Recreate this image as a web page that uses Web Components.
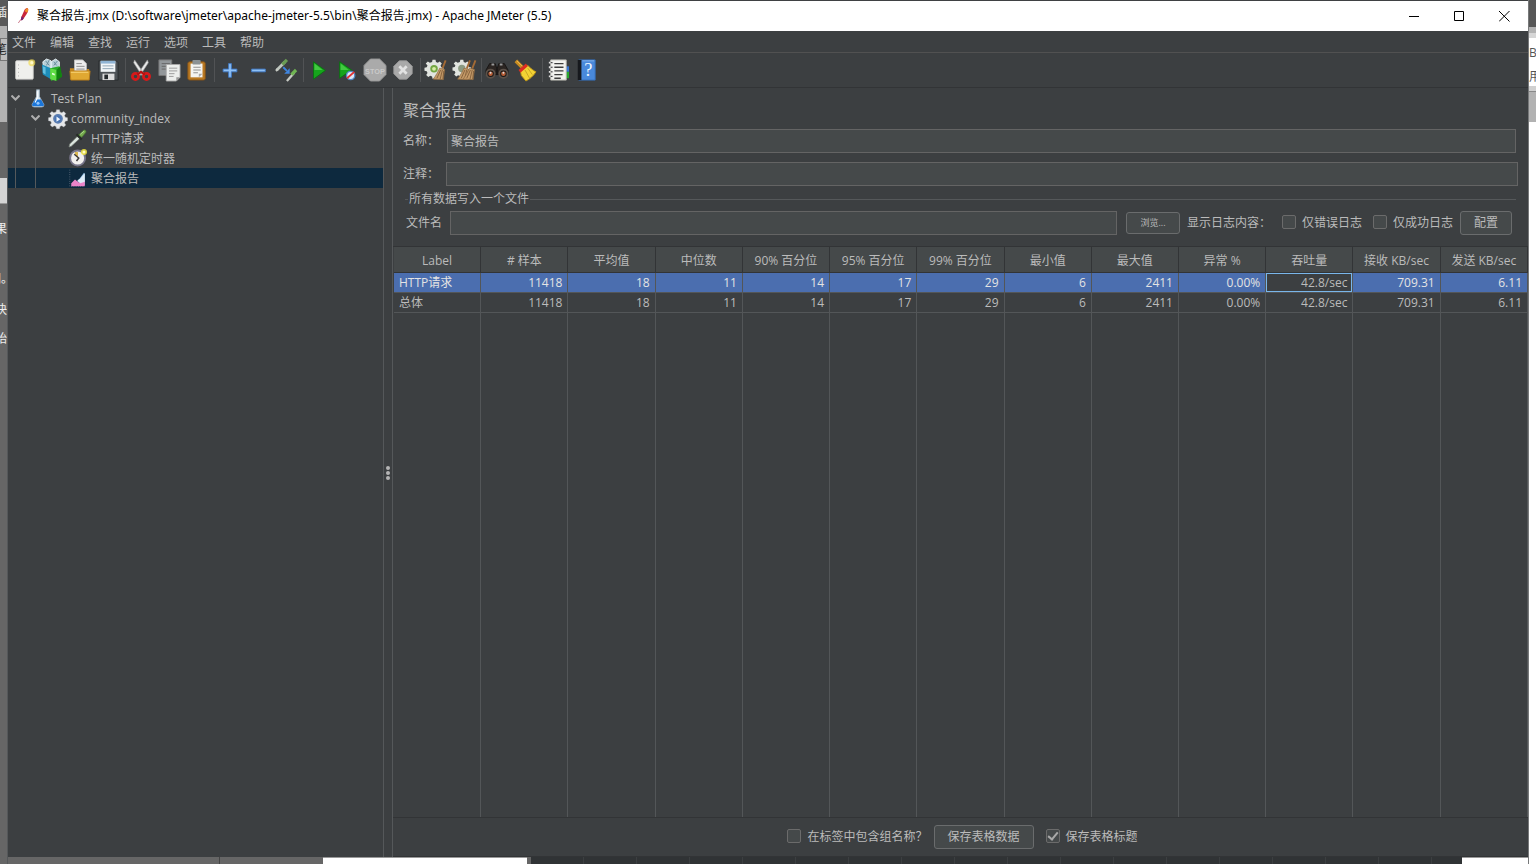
<!DOCTYPE html>
<html lang="zh-CN">
<head>
<meta charset="utf-8">
<title>聚合报告.jmx - Apache JMeter (5.5)</title>
<style>
  html, body { margin: 0; height: 100%; }
  body {
    --bg: #3c3f41; --field: #45494a; --line: #5b5d5f; --edge: #323436; --border: #646464; --text: #bbbbbb;
    font: 12px/20px "Open Sans", "Noto Sans CJK SC", sans-serif;
    color: var(--text); background: #666; overflow: hidden;
  }
</style>
</head>
<body>
<desk-top>
  <app-window>
    <title-bar slot="title">聚合报告.jmx (D:\software\jmeter\apache-jmeter-5.5\bin\聚合报告.jmx) - Apache JMeter (5.5)</title-bar>
    <menu-bar slot="menu" items="文件,编辑,查找,运行,选项,工具,帮助"></menu-bar>
    <tool-bar slot="tools"></tool-bar>
    <split-pane>
      <nav-tree slot="side">
        <tree-item level="1" icon="flask" open>Test Plan</tree-item>
        <tree-item level="2" icon="gear" open>community_index</tree-item>
        <tree-item level="3" icon="dropper">HTTP请求</tree-item>
        <tree-item level="3" icon="clock">统一随机定时器</tree-item>
        <tree-item level="3" icon="chart" selected>聚合报告</tree-item>
      </nav-tree>
      <report-panel>
        <report-form></report-form>
        <report-table slot="table"></report-table>
        <report-footer slot="footer"></report-footer>
      </report-panel>
    </split-pane>
  </app-window>
</desk-top>
<script>
const gearPath = 'M10 1h4l.6 3 2.4 1 2.6-1.7 2.8 2.8L20.700 8.700l1 2.300 3 .600v4l-3 .600-1 2.400 1.700 2.600-2.800 2.800-2.600-1.700-2.400 1-.600 3h-4l-.600-3-2.400-1-2.600 1.700-2.800-2.800 1.700-2.600-1-2.400-3-.600v-4l3-.600 1-2.300L1 6.100l2.800-2.800L6.400 5l3-1z';
const broom = x => `<g transform="translate(${x} 0)"><path d="M20.500 1.500l-3.500 9" stroke="#a46b35" stroke-width="2"/><path d="M14 10l5.500 1.500-1.500 11-11-.5c3-4 5-8 7-12z" fill="#c49a68" stroke="#8a653d" stroke-width=".7"/><path d="M15 12l-4 9M17 12l-2.500 10M18.500 13l-1 9" stroke="#725130" stroke-width=".8"/></g>`;
const ICONS = {
  feather: '<path d="M18.500 1.500c3 2 .5 6-1 9l-6 9-3 .5 1-5 4-9c1-2.500 2.500-4 5-4.500z" fill="#c9263c"/><path d="M18.500 1.500c2.500 1.500 1 4.500 0 7l-4-2c1-2.500 2-4.500 4-5z" fill="#ee8d28"/><path d="M10 14l3 3-2.500 3-2 0z" fill="#6b2579"/><path d="M8.500 19L5 24" stroke="#b43b56"/>',
  new: '<rect x="3" y="2" width="19" height="20" rx="1" fill="#f0f0ed" stroke="#d8d8d4"/><path d="M3.500 22.500h18" stroke="#999"/><path d="M6 6v14" stroke="#aaa" stroke-dasharray="1 3"/><circle cx="20.500" cy="4" r="3.800" fill="#f2dd55" opacity=".7"/><circle cx="20.500" cy="4" r="1.700" fill="#fff8c9"/>',
  templates: '<path d="M2 3l4-3 5 2v8l-8 2zM11 3l5-3 4 3v8l-9 2z" fill="#b8cfd7" stroke="#e9f2f5"/><path d="M5 2l4 5M9 1l-3 6M14 3l3 4M18 2l-4 5" stroke="#668999"/><path d="M1 6l10 4v12l-9-5z" fill="#1d8db9"/><path d="M2 8l3 1v8l-3-2z" fill="#62bfe0"/><path d="M10 10l10-2 3 11-12 5z" fill="#29aa28"/><path d="M10 10l7 2v12l-7-2z" fill="#60dc44"/><path d="M17 12l4-4 2 11-6 5z" fill="#11830f"/><path d="M12 15l3 1v2l-3-1z" fill="#e9ffe3"/>',
  open: '<path d="M1 10h8l2 1h11v11H1z" fill="#c88b20"/><path d="M6 1h9l4 4v10H6z" fill="#eee" stroke="#bbb"/><path d="M8 5h6M8 8h9M8 11h9" stroke="#888"/><path d="M1 13h22l-1 10H2z" fill="#e0a832" stroke="#b77b18"/><path d="M2 14.500h19" stroke="#f8d779"/>',
  save: '<path d="M2 2h19l2 2v19H2V4z" fill="#4e5357" stroke="#292c2e"/><path d="M4 2h16v12H4z" fill="#f1f5f7"/><path d="M4 2h16v3H4z" fill="#8fb4d4"/><path d="M6 7.500h12M6 10.500h12" stroke="#8aa1af"/><path d="M6 16h13v7H6z" fill="#ddd"/><path d="M8 17h4v5H8z" fill="#25292c"/>',
  cut: '<path d="M5 1l11 16-3 1L4 4zM19 1l1 3-9 14-3-1z" fill="#e8e9e9" stroke="#999" stroke-width=".7"/><circle cx="6" cy="19" r="3.400" stroke="#d81a1a" stroke-width="3"/><circle cx="18" cy="19" r="3.400" stroke="#d81a1a" stroke-width="3"/><path d="M8 17l4-3 4 3" stroke="#b90f0f" stroke-width="2.500"/>',
  copy: '<path d="M1 1h14v17H1z" fill="#92979a" stroke="#777"/><path d="M4 5h9M4 8h8M4 11h7" stroke="#666"/><path d="M9 6h15v14l-4 4H9z" fill="#eceeec" stroke="#aaa"/><path d="M12 10h9M12 13h9M12 16h6M12 19h5" stroke="#969696"/><path d="M20 24v-4h4z" fill="#999"/>',
  paste: '<rect x="2" y="3" width="19" height="20" rx="2" fill="#b97922" stroke="#81521b"/><path d="M5 5h13v15H5z" fill="#f4f4f2"/><rect x="7" y="1" width="9" height="5" rx="1" fill="#8b9194"/><path d="M8 9h8M8 12h8M8 15h5" stroke="#888"/><path d="M14 20v-4h4z" fill="#aaa"/>',
  plus: '<path d="M10.500 5h3v6h6v3h-6v6h-3v-6h-6v-3h6z" fill="#8fc0f4" stroke="#3f78c4"/>',
  minus: '<path d="M5 11h15v3H5z" fill="#8fc0f4" stroke="#3f78c4"/>',
  toggle: '<path d="M2 12l9-9" stroke="#bec6be" stroke-width="3"/><path d="M8 6l5-5" stroke="#6a9d54" stroke-width="3.500"/><path d="M1 13l2-2M13 24l8-9" stroke="#c7cbc5" stroke-width="2.500"/><path d="M18 17l5-5" stroke="#70b553" stroke-width="3.500"/><path d="M9 9l4 4" stroke="#3f86e0" stroke-width="2"/><path d="M16 10v6h-6z" fill="#3f86e0"/>',
  play: '<path d="M6 3l13 9.500L6 22z" fill="#16a51c" stroke="#0b6e12"/><path d="M7 5l9 7H7z" fill="#42c941"/>',
  playNo: '<path d="M4 3l13 9L4 21z" fill="#16a51c" stroke="#0b6e12"/><path d="M5 5l9 7H5z" fill="#42c941"/><circle cx="16" cy="18" r="4.500" fill="#dce8f7" stroke="#5188c5" stroke-width="1.500"/><path d="M12 21l8-7" stroke="#e13131" stroke-width="2"/>',
  stop: '<path d="M7 0h10l7 7v10l-7 7H7l-7-7V7z" fill="#aaa" stroke="#989898"/><text x="12" y="16" text-anchor="middle" font-family="Liberation Sans" font-size="8" font-weight="700" fill="#c9c9c9">STOP</text>',
  shutdown: '<path d="M8 2h8l6 6v8l-6 6H8l-6-6V8z" fill="#a9a9a9" stroke="#999"/><path d="M8 8l8 8M16 8l-8 8" stroke="#e2e2e2" stroke-width="3"/>',
  clear: `<g transform="scale(.82)"><path d="${gearPath}" fill="#e1e4df"/><circle cx="12" cy="13" r="5" fill="#73a642"/><circle cx="12" cy="13" r="2.500" fill="#d7eda4"/></g>${broom(2)}`,
  clearAll: `<g transform="scale(.8)"><path d="${gearPath}" fill="#e1e4df"/><circle cx="12" cy="13" r="5" fill="#8b9a82"/></g>${broom(-2)}${broom(4)}`,
  search: '<path d="M4 5h6l2 6v6H0v-5zM14 5h6l4 7v5H12v-6z" fill="#2b2522" stroke="#171514"/><path d="M6 6h3M15 6h3" stroke="#999" stroke-width="2"/><circle cx="5" cy="16" r="4.500" fill="#171717" stroke="#5c5149" stroke-width="2"/><circle cx="19" cy="16" r="4.500" fill="#171717" stroke="#5c5149" stroke-width="2"/><circle cx="5" cy="16" r="2.500" fill="#b65c34"/><circle cx="19" cy="16" r="2.500" fill="#b65c34"/><circle cx="5" cy="15" r="1" fill="#ddd"/><circle cx="19" cy="15" r="1" fill="#ddd"/>',
  sweep: '<path d="M2 2l7 7" stroke="#c78b20" stroke-width="4"/><path d="M3 2l6 6" stroke="#efbd58"/><path d="M7 13l8-6c4 4 7 6 9 7-3 5-7 8-11 10L8 18z" fill="#f3d334" stroke="#bd9415"/><path d="M5 12l8-7 2 3-8 7z" fill="#dd2d22"/><path d="M12 12l5 9M15 10l5 7" stroke="#c6a223"/>',
  functions: '<path d="M19 8h5v6h-5z" fill="#3775d3"/><path d="M18 14h6v7h-6z" fill="#28a72e"/><path d="M4 1h17v22H4z" fill="#f3f3ef" stroke="#b5b5ad"/><path d="M8 5h10M8 9h10M8 13h10M8 17h9M8 21h7" stroke="#3d3d3d" stroke-width="1.500"/><path d="M2 4h5M2 9h5M2 14h5M2 19h5" stroke="#ddd" stroke-width="2"/><path d="M4 4h2M4 9h2M4 14h2M4 19h2" stroke="#222"/>',
  help: '<path d="M4 1h18v22H4z" fill="#4989db" stroke="#336dba"/><path d="M3 1h4v22H3z" fill="#17191d"/><path d="M8 2h13" stroke="#88b6ee"/><text x="14.500" y="19" text-anchor="middle" font-family="Liberation Serif" font-size="20" fill="#eff7ff">?</text>',
  flask: '<path d="M10 1h4v9l6 11q0 3-3 3H7q-3 0-3-3l6-11z" fill="#d9e5ee" stroke="#9aabba"/><path d="M8 14h8l4 7q0 2-3 2H7q-3 0-3-2z" fill="#1b76da"/><path d="M11 3v9l-3 6" stroke="#fff" stroke-width="1.500"/><circle cx="12" cy="19" r="2" fill="#8fc4ff"/>',
  gear: `<path d="${gearPath}" fill="#e5e7e9" stroke="#b8bbc0" stroke-width=".5"/><circle cx="12" cy="13" r="5.500" fill="#4874b3" stroke="#5b7db0" stroke-width="2"/><path d="M10 10l5 3.500-5 3.500z" fill="#eff6ff"/>`,
  dropper: '<path d="M0 24l1-4 10-10 3 3L3 23z" fill="#dce5df" stroke="#798279"/><path d="M10 7l7 7" stroke="#262c26" stroke-width="3"/><path d="M13 8l6-6c2-2 5 1 3 3l-5 6z" fill="#78ad51" stroke="#4a7c30"/><path d="M15 7l5-4" stroke="#c0e6a2"/>',
  clock: '<circle cx="11.500" cy="12" r="10" fill="#f1f0ee" stroke="#77758a" stroke-width="2.500"/><path d="M12 12V4H8C7 7 9 10 12 12z" fill="#ddb951"/><path d="M7 7l6 5-3 4" stroke="#403c3d" stroke-width="2"/><circle cx="20" cy="4" r="4" fill="#f3e73c" opacity=".85"/><circle cx="20" cy="4" r="2" fill="#fffbc2"/>',
  chart: '<path d="M1 1v22h20" stroke="#778190" stroke-dasharray="1 2"/><path d="M11 17l9-12 1 1v16z" fill="#a3cbee"/><path d="M3 23v-4l5-5 5 4 8-3v8z" fill="#ec83c9"/><path d="M11 15l4-2 6-7v11l-6 2z" fill="#ddecf7"/>'
};
const glyph = n => `<svg viewBox="0 0 24 24" fill="none" aria-hidden="true">${ICONS[n]}</svg>`;

function define(name, render) {
  customElements.define(name, class extends HTMLElement {
    constructor() { super(); this.attachShadow({ mode: 'open' }); }
    connectedCallback() { this.shadowRoot.innerHTML = render(this); }
  });
}

const FIELD_CSS = `
  input[type=text] { box-sizing: border-box; height: 24px; min-width: 0; flex: 1; margin: 0; padding: 0 3px;
    font: inherit; color: var(--text); background: var(--field); border: 1px solid var(--border); border-radius: 0; outline: 0; }
  input[type=checkbox] { appearance: none; box-sizing: border-box; display: grid; place-items: center; width: 14px; height: 14px;
    margin: 0 0 2px; background: var(--field); border: 1px solid #6b6b6b; border-radius: 2px; }
  input[type=checkbox]:checked::before { content: ""; width: 4px; height: 8px; margin-bottom: 3px;
    border: solid #a9a9a9; border-width: 0 2px 2px 0; transform: rotate(40deg); }
  button { box-sizing: border-box; height: 24px; padding: 0; font: inherit; color: var(--text);
    background: var(--field); border: 1px solid #6a6c6d; border-radius: 3px; white-space: nowrap; }
  label { white-space: nowrap; }`;

define('desk-top', () => `<style>
  :host { display: grid; height: 100vh; grid-template: 1px minmax(0, 1fr) 7px / 8px minmax(0, 1fr) 8px; background: #3f4143; overflow: hidden; }
  .side { grid-row: 1 / 4; overflow: hidden; min-height: 0; display: flex; flex-direction: column; white-space: nowrap; }
  .side > div { flex: none; box-sizing: border-box; display: flex; align-items: center; }
  .left { grid-column: 1; background: #666; color: #eee; border-right: 1px solid #55585a; font-feature-settings: "halt"; }
  .left > div { justify-content: flex-end; }
  .right { grid-column: 3; background: #fff; color: #555; border-left: 1px solid #77797a; }
  .center { grid-column: 2; grid-row: 2; min-width: 0; min-height: 0; display: grid; }
  .bottom { grid-column: 2; grid-row: 3; display: grid; grid-template-columns: 315px 204px 1fr 66px; }
  .task { background: linear-gradient(90deg, transparent 211px, #444 211px, #444 212px, transparent 212px), #666; }
  .page { background: #fff; border-top: 1px solid #999; }
  .dark { background: repeating-linear-gradient(90deg, #303335 0 52px, #3c3f41 52px 53px); border-left: 4px solid #666; }
</style>
<div class="side left">
  <div style="height:26px;background:#595959">插</div>
  <div style="height:12px;background:#b2b2b2"></div>
  <div style="height:23px;background:#bdbdbd;color:#222;border:solid #777;border-width:1px 0 1px 1px">笔</div>
  <div style="height:61px;background:#b2b2b2"></div>
  <div style="height:56px"></div>
  <div style="height:26px;background:#d4d4d4;border-bottom:1px solid #999"></div>
  <div style="height:50px">果</div>
  <div style="height:50px">调。</div>
  <div style="height:12px">快</div>
  <div style="height:46px">始</div>
</div>
<div class="center"><slot></slot></div>
<div class="side right">
  <div style="height:27px;background:#575757"></div>
  <div style="height:6px;background:#b2b2b2"></div>
  <div style="height:5px;background:#d6d6d6"></div>
  <div style="height:30px">Be</div>
  <div style="height:18px">用</div>
  <div style="height:6px;background:#d0d0d0;border-bottom:1px solid #888"></div>
  <div style="height:30px;background:#b2b2b2"></div>
</div>
<div class="bottom"><div class="task"></div><div class="page"></div><div class="dark"></div><div class="page"></div></div>`);

define('app-window', () => `<style>
  :host { display: grid; grid-template-rows: auto auto auto minmax(0, 1fr); grid-template-columns: minmax(0, 1fr); background: var(--bg); min-height: 0; }
</style><slot name="title"></slot><slot name="menu"></slot><slot name="tools"></slot><slot></slot>`);

define('title-bar', () => `<style>
  :host { display: flex; align-items: center; height: 30px; padding-right: 1px; background: #fff; color: #000; }
  .logo { width: 18px; height: 18px; margin: 0 4px 0 7px; }
  .logo svg { display: block; width: 16px; height: 16px; }
  h1 { flex: 1; margin: 0; font: 12px/20px "Noto Sans", "Noto Sans CJK SC", sans-serif; white-space: nowrap; }
  button { width: 45px; height: 30px; padding: 0; border: 0; background: none; display: grid; place-items: center; }
  button svg { width: 11px; height: 11px; }
</style>
<span class="logo">${glyph('feather')}</span><h1><slot></slot></h1>
<button aria-label="最小化"><svg viewBox="0 0 11 11"><path d="M0 5.500h10" stroke="#000"/></svg></button>
<button aria-label="最大化"><svg viewBox="0 0 11 11"><path d="M.5.5h9v9h-9z" fill="none" stroke="#000"/></svg></button>
<button aria-label="关闭"><svg viewBox="0 0 11 11"><path d="M0 0l10.500 10.500M10.500 0L0 10.500" stroke="#000"/></svg></button>`);

define('menu-bar', el => `<style>
  :host { display: block; border-bottom: 1px solid #515151; }
  nav { display: flex; gap: 14px; height: 21px; padding-left: 4px; align-items: center; }
  button { padding: 2px 0 0; border: 0; background: none; color: inherit; font: inherit; }
</style><nav>${el.getAttribute('items').split(',').map(t => `<button>${t}</button>`).join('')}</nav>`);

define('tool-bar', () => {
  const groups = [
    [['new', '新建'], ['templates', '模板'], ['open', '打开'], ['save', '保存']],
    [['cut', '剪切'], ['copy', '复制'], ['paste', '粘贴']],
    [['plus', '展开'], ['minus', '折叠'], ['toggle', '切换']],
    [['play', '启动'], ['playNo', '不停顿开始'], ['stop', '停止', 1], ['shutdown', '关闭', 1]],
    [['clear', '清除'], ['clearAll', '清除全部']],
    [['search', '查找'], ['sweep', '重置搜索']],
    [['functions', '函数助手'], ['help', '帮助']]
  ];
  return `<style>
    :host { display: flex; height: 34px; padding-left: 3px; align-items: center; border-bottom: 1px solid var(--edge); }
    button { width: 28px; height: 28px; padding: 0 0 0 2px; border: 0; background: none; display: grid; place-items: center start; }
    svg { width: 22px; height: 22px; overflow: visible; }
    i { width: 1px; height: 24px; margin: 0 2px; background: #515355; }
  </style>` + groups.map(g => g.map(([n, t, off]) =>
    `<button aria-label="${t}"${off ? ' disabled' : ''}>${glyph(n)}</button>`).join('')).join('<i></i>');
});

define('split-pane', () => `<style>
  :host { display: grid; grid-template-columns: 375px 10px minmax(0, 1fr); grid-template-rows: minmax(0, 1fr); min-height: 0; }
  .bar { box-sizing: border-box; border: solid #55585a; border-width: 0 1px; display: flex; flex-direction: column; gap: 1px; justify-content: center; align-items: center; }
  .bar i { width: 4px; height: 4px; border-radius: 50%; background: #b5b5b5; }
</style><slot name="side"></slot><div class="bar" role="separator"><i></i><i></i><i></i></div><slot></slot>`);

define('nav-tree', () => `<style>:host { display: block; }</style><slot></slot>`);

define('tree-item', el => {
  const level = +el.getAttribute('level');
  const guides = Array.from({ length: level - 1 }, () => '<i></i>').join('');
  return `<style>
    :host { display: flex; height: 20px; align-items: center; white-space: nowrap; }
    :host([selected]) { background: #0d293e; }
    i { box-sizing: border-box; width: 20px; height: 20px; padding: 0; background: linear-gradient(90deg, transparent 7px, #55595b 7px, #55595b 8px, transparent 8px); }
    .arrow { width: 20px; height: 20px; display: grid; place-items: center start; }
    .arrow svg { width: 9px; height: 6px; margin-left: 3px; }
    .icon { width: 20px; height: 18px; margin-right: 3px; display: flex; justify-content: center; }
    .icon svg { width: 18px; height: 18px; overflow: visible; }
    .text { padding-top: 2px; }
  </style>${guides}<span class="arrow">${el.hasAttribute('open') ? '<svg viewBox="0 0 9 6"><path d="M.5.5l4 4 4-4" fill="none" stroke="#adadad" stroke-width="2"/></svg>' : ''}</span>
  <span class="icon">${glyph(el.getAttribute('icon'))}</span><span class="text"><slot></slot></span>`;
});

define('report-panel', () => `<style>
  :host { display: grid; grid-template-rows: auto minmax(0, 1fr) auto; grid-template-columns: minmax(0, 1fr); min-height: 0; }
</style><slot></slot><slot name="table"></slot><slot name="footer"></slot>`);

define('report-form', () => `<style>${FIELD_CSS}
  :host { display: block; padding: 10px 12px 11px 10px; }
  h2 { margin: 0 0 7px; font-size: 16px; line-height: 24px; font-weight: 400; }
  .row { display: flex; align-items: center; margin-bottom: 9px; }
  .row label { width: 44px; }
  .row.wide { margin: 0 -2px 3px 0; }
  .wide label { width: 43px; }
  fieldset { min-width: 0; margin: 0 0 0 2px; padding: 2px 4px 0 1px; border: 0; border-top: 1px solid #55585a; }
  legend { padding: 0 1px; margin-left: 2px; line-height: 20px; }
  .file { display: flex; align-items: center; }
  .file input[type=text] { margin: 0 9px 0 8px; }
  .browse { width: 54px; height: 22px; font-size: 9px; margin-right: 7px; }
  .logs { width: 95px; }
  .check { display: flex; align-items: center; gap: 6px; margin-right: 11px; }
  .check + .check { margin-right: 7px; }
  .config { width: 52px; }
</style>
<h2>聚合报告</h2>
<div class="row"><label for="name">名称：</label><input id="name" type="text" value="聚合报告"></div>
<div class="row wide"><label for="note">注释：</label><input id="note" type="text"></div>
<fieldset><legend>所有数据写入一个文件</legend>
  <div class="file"><label for="file">文件名</label><input id="file" type="text">
    <button class="browse">浏览...</button><span class="logs">显示日志内容：</span>
    <label class="check"><input type="checkbox">仅错误日志</label>
    <label class="check"><input type="checkbox">仅成功日志</label>
    <button class="config">配置</button></div>
</fieldset>`);

define('report-table', () => {
  const heads = ['Label', '# 样本', '平均值', '中位数', '90% 百分位', '95% 百分位', '99% 百分位', '最小值', '最大值', '异常 %', '吞吐量', '接收 KB/sec', '发送 KB/sec'];
  const data = ['11418', '18', '11', '14', '17', '29', '6', '2411', '0.00%', '42.8/sec', '709.31', '6.11'];
  const row = (name, cls) => `<tr class="${cls}"><td>${name}</td>${data.map((v, i) => `<td${cls && i === 9 ? ' class="focus"' : ''}>${v}</td>`).join('')}</tr>`;
  return `<style>
    :host { display: block; min-height: 0; padding-left: 1px; border: solid var(--edge); border-width: 1px 0; overflow: hidden; }
    table { width: 100%; height: 100%; table-layout: fixed; border-collapse: separate; border-spacing: 0; }
    th, td { box-sizing: border-box; padding: 0 5px; font-weight: 400; line-height: 19px; white-space: nowrap; border: solid #535658; border-width: 0 1px 1px 0; }
    th { height: 26px; padding: 2px 0 0; background: var(--field); border-color: var(--edge); text-align: center; }
    td { height: 20px; text-align: right; }
    td:first-child { text-align: left; }
    .selected td { background: #4b6eaf; color: #e4e4e4; }
    .selected .focus { background: var(--bg); color: var(--text); box-shadow: inset 0 0 0 1px #79b6ea; }
    .filler td { height: auto; border-bottom: 0; }
  </style><table><thead><tr>${heads.map(h => `<th scope="col">${h}</th>`).join('')}</tr></thead>
  <tbody>${row('HTTP请求', 'selected')}${row('总体', '')}<tr class="filler">${'<td></td>'.repeat(13)}</tr></tbody></table>`;
});

define('report-footer', () => `<style>${FIELD_CSS}
  :host { display: flex; height: 39px; align-items: center; justify-content: center; gap: 12px; padding-left: 4px; border-bottom: 1px solid var(--edge); box-sizing: border-box; }
  label { display: flex; align-items: center; gap: 6px; }
  label:first-of-type { margin-right: -6px; }
  button { width: 100px; }
</style>
<label><input type="checkbox">在标签中包含组名称？</label>
<button>保存表格数据</button>
<label><input type="checkbox" checked>保存表格标题</label>`);
</script>
</body>
</html>
